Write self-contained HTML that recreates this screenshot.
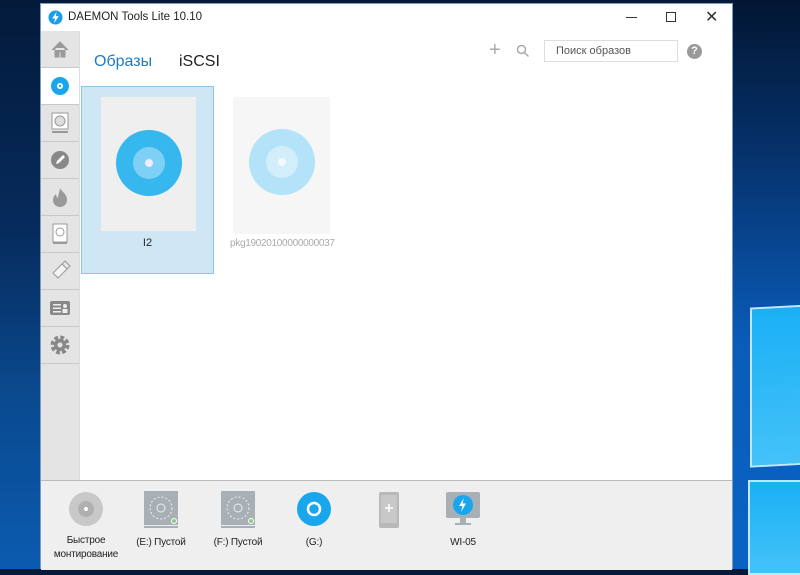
<!DOCTYPE html>
<html><head><meta charset="utf-8"><style>
*{margin:0;padding:0;box-sizing:border-box}
body{width:800px;height:569px;overflow:hidden;position:relative;font-family:"Liberation Sans","Noto Sans CJK SC",sans-serif;background:linear-gradient(180deg,#031a3a 0%,#062b5c 40%,#0a4a8f 70%,#0b5bb0 100%)}
.desk{position:absolute;left:733px;top:0;width:67px;height:569px;background:linear-gradient(180deg,#021632 0%,#063572 30%,#0a5cb8 60%,#0a63c4 100%)}
.pane{position:absolute;border:2px solid #bfe8ff;background:linear-gradient(180deg,#1ab0f5,#44c2f8)}
.win{position:absolute;left:40px;top:3px;width:693px;height:566px;background:#fff;border:1px solid #7a9cc0}
.title{position:absolute;left:0;top:0;width:100%;height:27px;font-size:11.5px;color:#222}
.side{position:absolute;left:0;top:27px;width:39px;height:450px;background:#e4e4e4;border-right:1px solid #ddd}
.si{height:37px;border-bottom:1px solid #c8c8c8;display:flex;align-items:center;justify-content:center}
.bottom{position:absolute;left:0;top:476px;width:100%;height:90px;background:#efefef;border-top:1px solid #bbb}
.bi{position:absolute;top:10px;text-align:center;font-size:10px;color:#222;line-height:14px;letter-spacing:-0.2px}
</style></head><body>
<div class="desk"></div>
<div class="pane" style="left:750px;top:306px;width:60px;height:160px;transform:skewY(-3deg)"></div>
<div class="pane" style="left:748px;top:480px;width:60px;height:95px"></div>
<div class="win">
 <div class="title">
  <svg style="position:absolute;left:7px;top:6px" width="15" height="15" viewBox="0 0 16 16"><circle cx="8" cy="8" r="7.5" fill="#1a9ee6"/><path d="M9 2L4.5 9h3l-1 5 5-7.5h-3z" fill="#fff"/></svg>
  <span style="position:absolute;left:27px;top:7px">DAEMON Tools Lite 10.10</span>
  <div style="position:absolute;left:585px;top:13px;width:11px;height:1px;background:#333"></div>
  <div style="position:absolute;left:625px;top:8px;width:10px;height:10px;border:1px solid #333"></div>
  <span style="position:absolute;left:664px;top:3px;font-size:16px;color:#333">✕</span>
 </div>
 <div class="side">
  <div class="si" style="background:#e4e4e4"><svg width="20" height="18"><path d="M2 10L10 2l8 8M5 8v9h4v-5h2v5h4V8" fill="#999" stroke="#999"/></svg></div>
  <div class="si" style="background:#fff"><svg width="20" height="20"><circle cx="10" cy="10" r="9" fill="#1aa6ec"/><circle cx="10" cy="10" r="3" fill="#fff"/><circle cx="10" cy="10" r="1.2" fill="#1aa6ec"/></svg></div>
  <div class="si"><svg width="20" height="22"><rect x="2" y="1" width="16" height="16" fill="#fff" stroke="#999"/><circle cx="10" cy="9" r="5" fill="#ddd" stroke="#999"/><rect x="2" y="19" width="16" height="2" fill="#999"/></svg></div>
  <div class="si"><svg width="20" height="20"><circle cx="10" cy="10" r="9" fill="#888"/><path d="M6 14l1-3 6-6 2 2-6 6z" fill="#fff"/></svg></div>
  <div class="si"><svg width="18" height="20"><path d="M9 1c2 4 7 6 7 12a7 7 0 0 1-14 0c0-3 2-5 3-6 0 3 2 4 2 4 0-4 2-7 2-10z" fill="#999"/></svg></div>
  <div class="si"><svg width="18" height="22"><rect x="2" y="1" width="14" height="18" fill="#fff" stroke="#999"/><circle cx="9" cy="9" r="4" fill="none" stroke="#999"/><rect x="2" y="19" width="14" height="2" fill="#999"/></svg></div>
  <div class="si"><svg width="22" height="22"><path d="M4 13l9-9 5 5-9 9z" fill="#f4f4f4" stroke="#999"/><path d="M13 4l3-3 5 5-3 3" fill="none" stroke="#999"/></svg></div>
  <div class="si"><svg width="22" height="16"><rect x="1" y="1" width="20" height="14" rx="2" fill="#888"/><rect x="4" y="4" width="8" height="1.5" fill="#eee"/><rect x="4" y="7.5" width="8" height="1.5" fill="#eee"/><rect x="4" y="11" width="8" height="1.5" fill="#eee"/><circle cx="16" cy="6" r="2" fill="#eee"/><rect x="13.5" y="9" width="5" height="4" fill="#eee"/></svg></div>
  <div class="si"><svg width="22" height="22" viewBox="0 0 22 22"><circle cx="11" cy="11" r="7" fill="none" stroke="#888" stroke-width="5" stroke-dasharray="3.5 2"/><circle cx="11" cy="11" r="6" fill="#888"/><circle cx="11" cy="11" r="2.5" fill="#e4e4e4"/></svg></div>
 </div>
 <span style="position:absolute;left:53px;top:49px;font-size:16px;color:#1f7bc2">Образы</span>
 <span style="position:absolute;left:138px;top:49px;font-size:16px;color:#222">iSCSI</span>
 <span style="position:absolute;left:448px;top:35px;font-size:20px;color:#aaa">+</span>
 <svg style="position:absolute;left:475px;top:40px" width="14" height="14"><circle cx="5.5" cy="5.5" r="4" fill="none" stroke="#aaa" stroke-width="1.5"/><path d="M8.5 8.5l4 4" stroke="#aaa" stroke-width="1.5"/></svg>
 <div style="position:absolute;left:503px;top:36px;width:134px;height:22px;border:1px solid #ddd;font-size:11px;color:#555;padding:4px 0 0 11px">Поиск образов</div>
 <div style="position:absolute;left:646px;top:40px;width:15px;height:15px;border-radius:50%;background:#999;color:#fff;font-size:11px;font-weight:bold;text-align:center;line-height:15px">?</div>
 <div style="position:absolute;left:40px;top:82px;width:133px;height:188px;background:#cfe6f5;border:1px solid #8ec3e6">
  <div style="position:absolute;left:19px;top:10px;width:95px;height:134px;background:#efefef"></div>
  <svg style="position:absolute;left:33px;top:42px" width="68" height="68"><circle cx="34" cy="34" r="33" fill="#36b7ee"/><circle cx="34" cy="34" r="16" fill="#7fd0f5"/><circle cx="34" cy="34" r="4" fill="#eef"/></svg>
  <div style="position:absolute;top:150px;width:100%;text-align:center;font-size:11px;color:#222">I2</div>
 </div>
 <div style="position:absolute;left:192px;top:93px;width:97px;height:137px;background:#f6f6f6"></div>
 <svg style="position:absolute;left:207px;top:124px" width="68" height="68"><circle cx="34" cy="34" r="33" fill="#b4e3f9"/><circle cx="34" cy="34" r="16" fill="#d2eefb"/><circle cx="34" cy="34" r="4" fill="#f2f9fd"/></svg>
 <div style="position:absolute;left:189px;top:234px;font-size:10px;letter-spacing:-0.3px;color:#aaa">pkg19020100000000037</div>
 <div class="bottom">
  <div class="bi" style="left:0;width:90px"><svg width="36" height="36"><circle cx="18" cy="18" r="17" fill="#c8c8c8"/><circle cx="18" cy="18" r="8" fill="#b0b0b0"/><circle cx="18" cy="18" r="2" fill="#fff"/></svg><br><span style="position:relative;top:2px">Быстрое<br>монтирование</span></div>
  <div class="bi" style="left:89px;width:62px"><svg width="36" height="38"><rect x="1" y="0" width="34" height="34" fill="#a8b0b5"/><circle cx="18" cy="17" r="11" fill="none" stroke="#eee" stroke-dasharray="2 2"/><circle cx="18" cy="17" r="4" fill="none" stroke="#eee"/><rect x="1" y="35" width="34" height="2" fill="#a8b0b5"/><circle cx="31" cy="30" r="2.5" fill="#8c8" stroke="#fff"/></svg><br><span style="position:relative;top:2px">(E:) Пустой</span></div>
  <div class="bi" style="left:166px;width:62px"><svg width="36" height="38"><rect x="1" y="0" width="34" height="34" fill="#a8b0b5"/><circle cx="18" cy="17" r="11" fill="none" stroke="#eee" stroke-dasharray="2 2"/><circle cx="18" cy="17" r="4" fill="none" stroke="#eee"/><rect x="1" y="35" width="34" height="2" fill="#a8b0b5"/><circle cx="31" cy="30" r="2.5" fill="#8c8" stroke="#fff"/></svg><br><span style="position:relative;top:2px">(F:) Пустой</span></div>
  <div class="bi" style="left:245px;width:56px"><svg width="36" height="36"><circle cx="18" cy="18" r="17" fill="#1aa6ec"/><circle cx="18" cy="18" r="6" fill="none" stroke="#fff" stroke-width="2.5"/></svg><br><span style="position:relative;top:4px">(G:)</span></div>
  <div class="bi" style="left:328px;width:40px"><svg width="22" height="38"><rect x="1" y="1" width="20" height="36" rx="2" fill="#b8b8b8"/><rect x="3" y="4" width="16" height="28" fill="#c8c8c8"/><path d="M11 13v8M7 17h8" stroke="#fff" stroke-width="1.5"/></svg></div>
  <div class="bi" style="left:400px;width:44px"><svg width="38" height="36"><rect x="2" y="1" width="34" height="26" rx="2" fill="#a8b0b5"/><circle cx="19" cy="14" r="10" fill="#1aa6ec"/><path d="M20 7l-5 8h3.5l-1.5 6 5-8.5h-3.5z" fill="#fff"/><rect x="16" y="27" width="6" height="5" fill="#a8b0b5"/><rect x="11" y="32" width="16" height="2" fill="#a8b0b5"/></svg><br><span style="position:relative;top:4px">WI-05</span></div>
 </div>
</div>
</body></html>
